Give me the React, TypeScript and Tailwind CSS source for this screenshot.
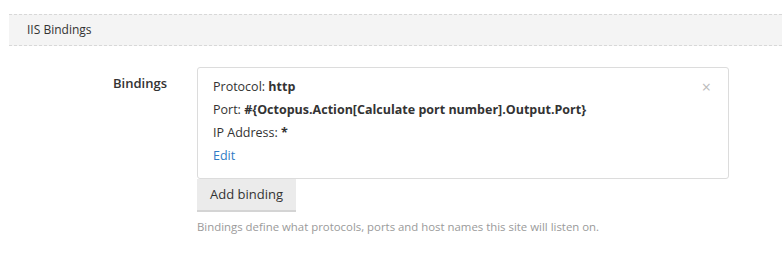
export default function App() {
  return (
    <div className="w-[782px] h-[253px] bg-white overflow-hidden font-['Open_Sans',sans-serif] text-[#333]">
      <div className="ml-[9px] mt-[14px] h-[32px] bg-[#f4f4f4] border-y border-dashed border-[#d8d8d8] flex items-center pl-[18px] text-[12px] text-[#333]">
        IIS Bindings
      </div>
      <div className="flex mt-[21px]">
        <div className="w-[167px] text-right text-[13px] font-semibold pt-[7px] shrink-0">Bindings</div>
        <div className="ml-[30px] w-[532px]">
          <div className="relative border border-[#dcdcdc] rounded-[3px] px-[15px] pt-[7px] pb-[11px] text-[12.5px] leading-[23px]">
            <div>
              Protocol: <span className="font-bold">http</span>
            </div>
            <div>
              Port: <span className="font-bold">#{"{"}Octopus.Action[Calculate port number].Output.Port{"}"}</span>
            </div>
            <div>
              IP Address: <span className="font-bold">*</span>
            </div>
            <div className="text-[#2f7bc5]">Edit</div>
            <span className="absolute right-[17px] top-[11px] text-[16px] leading-none text-[#bbb]">×</span>
          </div>
          <button className="h-[31px] px-[13px] bg-[#ebebeb] text-[13px] text-[#333] shadow-[0_2px_0_#d4d4d4]">
            Add binding
          </button>
          <div className="mt-[8px] text-[11.4px] text-[#9a9a9a]">
            Bindings define what protocols, ports and host names this site will listen on.
          </div>
        </div>
      </div>
    </div>
  );
}
